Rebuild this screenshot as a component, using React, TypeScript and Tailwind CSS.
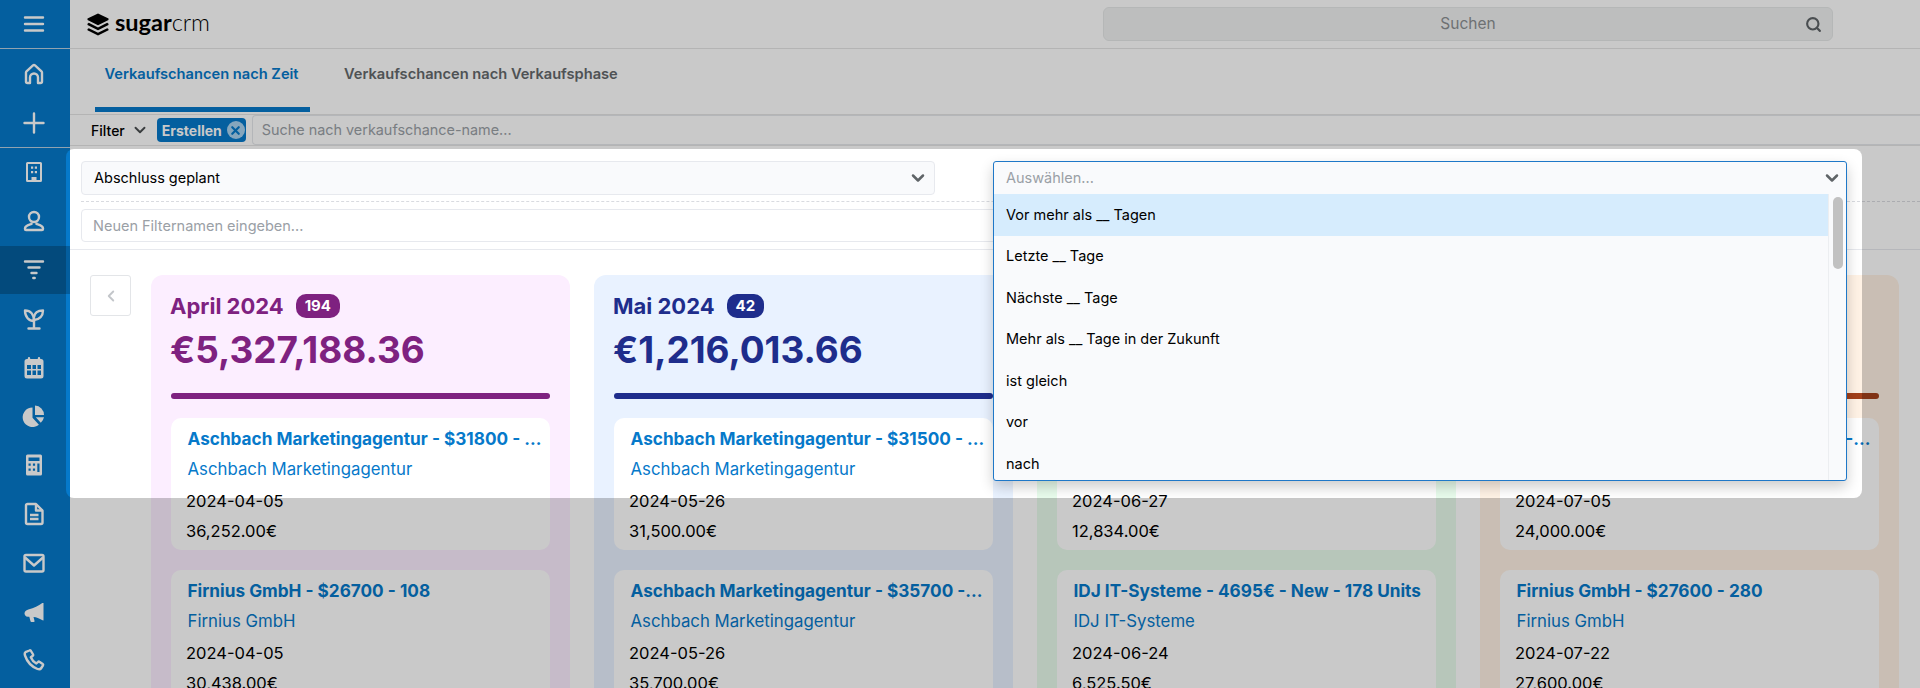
import { ChevronDown, ChevronLeft, Search, X } from "lucide-react";

const sb = "fill-none stroke-current stroke-[2.4]";

const Menu = () => (
  <svg viewBox="0 0 24 24" className={"h-6 w-6 " + sb} strokeLinecap="round">
    <path d="M3 5.500h18M3 12h18M3 18.500h18" />
  </svg>
);
const Home = () => (
  <svg viewBox="0 0 24 24" className={"h-6 w-6 " + sb} strokeLinejoin="round">
    <path d="M5.500 21A1.500 1.500 0 0 1 4 19.500v-9a1.500 1.500 0 0 1 .5-1.100l6.500-6a1.500 1.500 0 0 1 2 0l6.500 6a1.500 1.500 0 0 1 .5 1.100v9a1.500 1.500 0 0 1-1.500 1.500H16v-5.500a4 4 0 0 0-8 0V21z" />
  </svg>
);
const Plus = () => (
  <svg viewBox="0 0 24 24" className={"h-6 w-6 " + sb} strokeLinecap="round">
    <path d="M12 2.500v19M2.500 12h19" />
  </svg>
);
const Building = () => (
  <svg viewBox="0 0 24 24" className="h-6 w-6 fill-current">
    <path fillRule="evenodd" d="M5.500 2h13A1.500 1.500 0 0 1 20 3.500v17a1.500 1.500 0 0 1-1.500 1.500h-13A1.500 1.500 0 0 1 4 20.500v-17A1.500 1.500 0 0 1 5.500 2zM6 4v16h3.500v-3h5v3H18V4zm3 2.500h2.200v2.200H9zm3.800 0H15v2.200h-2.200zM9 11h2.200v2.200H9zm3.800 0H15v2.200h-2.200z" />
  </svg>
);
const User = () => (
  <svg viewBox="0 0 24 24" className={"h-6 w-6 " + sb} strokeLinejoin="round">
    <circle cx="12" cy="8" r="5" />
    <path d="M9.500 13.500v1.500c-2 .8-6.500 1.500-6.500 4.500v.5a1 1 0 0 0 1 1h16a1 1 0 0 0 1-1v-.5c0-3-4.500-3.700-6.500-4.500v-1.500" />
  </svg>
);
const Funnel = () => (
  <svg viewBox="0 0 24 24" className={"h-6 w-6 " + sb} strokeLinecap="round">
    <path d="M3 3.500h18M6.500 9.500h11M9.500 15h5M11.300 20h1.400" />
  </svg>
);
const Sprout = () => (
  <svg viewBox="0 0 24 24" className={"h-6 w-6 " + sb} strokeLinecap="round" strokeLinejoin="round">
    <path d="M12 21v-7M6.500 21.500h11" />
    <path d="M12 14C7 14 3 10 3 3.500c5.500 0 9 4 9 10.500z" />
    <path d="M12 10c.5-3.500 3.500-6.500 9-6.500 0 5.500-3.500 9-9 9.500" />
  </svg>
);
const Calendar = () => (
  <svg viewBox="0 0 24 24" className="h-6 w-6 fill-current">
    <path fillRule="evenodd" d="M7 1a1.200 1.200 0 0 1 1.200 1.200V3h7.600v-.8a1.200 1.200 0 0 1 2.400 0V3H19a2.500 2.500 0 0 1 2.500 2.500V20a2.500 2.500 0 0 1-2.500 2.500H5A2.500 2.500 0 0 1 2.500 20V5.500A2.500 2.500 0 0 1 5 3h.8v-.8A1.200 1.200 0 0 1 7 1zM5 9v4h4V9zm5.500 0v4h3.500V9zM15.500 9v4H19V9zM5 14.500V19h4v-4.500zm5.500 0V19h3.500v-4.500zm5 0V19H19v-4.500z" />
  </svg>
);
const Pie = () => (
  <svg viewBox="0 0 24 24" className="h-6 w-6 fill-current">
    <path d="M10.500 3.500v10.300l6.400 6.900A9.800 9.800 0 1 1 10.500 3.500z" />
    <path d="M13 1.500a9.500 9.500 0 0 1 9 9.500h-9z" />
    <path d="M13.800 13.300H22a9.800 9.800 0 0 1-3.200 5.400z" />
  </svg>
);
const Calc = () => (
  <svg viewBox="0 0 24 24" className="h-6 w-6 fill-current">
    <path fillRule="evenodd" d="M5.500 1.500h13A1.500 1.500 0 0 1 20 3v18a1.500 1.500 0 0 1-1.500 1.500h-13A1.500 1.500 0 0 1 4 21V3a1.500 1.500 0 0 1 1.500-1.500zM6.500 4.500v3.500h11V4.500zm0 6v2.200h2.200v-2.200zm4.400 0v2.200h2.200v-2.200zm4.400 0V19h2.200v-8.500zM6.500 15.500v2.200h2.200v-2.200zm4.400 0v2.200h2.200v-2.200z" />
  </svg>
);
const Doc = () => (
  <svg viewBox="0 0 24 24" className={"h-6 w-6 " + sb} strokeLinejoin="round">
    <path d="M4 3.500A1.500 1.500 0 0 1 5.500 2H14l6.500 6.500V20.500a1.500 1.500 0 0 1-1.500 1.500H5.500A1.500 1.500 0 0 1 4 20.500z" />
    <path d="M14 2v6.500h6.500M8 13h8.500M8 17h8.500" />
  </svg>
);
const Mail = () => (
  <svg viewBox="0 0 24 24" className={"h-6 w-6 " + sb} strokeLinejoin="round">
    <rect x="2.500" y="4" width="19" height="16.500" rx="1.500" />
    <path d="M3 6.500l9 8 9-8" />
  </svg>
);
const Megaphone = () => (
  <svg viewBox="0 0 24 24" className="h-6 w-6 fill-current">
    <path d="M21.500 3v17.500l-1-.2c-3.500-2-6-3-9-3.300l1 3.700a1 1 0 0 1-1 1.300H9.500a1 1 0 0 1-1-.8L7.300 16.800H6a3.500 3.500 0 0 1-3.200-4.900c.5-1 2-2 3.500-2.400 6-1.300 10-3.600 14-6.500z" />
  </svg>
);
const Phone = () => (
  <svg viewBox="0 0 24 24" className={"h-6 w-6 " + sb} strokeLinejoin="round">
    <path d="M7.500 2.500L4 3.800C2.800 4.500 2.500 6 3 7.500 5 13.500 9.500 18.500 15.500 21c1.500.6 3 .3 3.800-1l1.700-2.700a1 1 0 0 0-.3-1.300l-3.300-2.300a1 1 0 0 0-1.300.1l-1.800 1.700c-2.500-1.300-4.300-3.500-5.500-6.300l2-1.500a1 1 0 0 0 .3-1.200L9 3a1 1 0 0 0-1.500-.5z" />
  </svg>
);

const Logo = () => (
  <svg viewBox="0 0 24 24" className="h-[23px] w-[24px]" preserveAspectRatio="none">
    <path d="M12 .5l10.500 5.300v1.400L12 12.700 1.500 7.200V5.800z" fill="#000" />
    <path d="M2.800 10.300L12 15l9.200-4.700 1.300.9v1.300L12 18 1.500 12.500v-1.300z" fill="#000" />
    <path d="M2.800 15.800L12 20.500l9.200-4.700 1.300.9V18L12 23.500 1.500 18v-1.300z" fill="#000" />
  </svg>
);

const upper = [Home, Plus];
const lower = [Building, User, Funnel, Sprout, Calendar, Pie, Calc, Doc, Mail, Megaphone, Phone];

function Sidebar() {
  return (
    <aside className="w-[70px] shrink-0 bg-[#0679ca] text-white">
      <div className="flex h-[49px] items-center justify-center border-b border-[#e5e5e5]/80 pr-[2px]">
        <Menu />
      </div>
      <div className="flex h-[99px] flex-col border-b border-[#e5e5e5]/80">
        {upper.map((Icon, i) => (
          <div key={i} className="flex h-[49px] items-center justify-center pr-[2px]">
            <Icon />
          </div>
        ))}
      </div>
      {lower.map((Icon, i) => (
        <div
          key={i}
          className={"flex h-[48.8px] items-center justify-center pr-[2px] " + (Icon === Funnel ? "bg-[#045e9e]" : "")}
        >
          <Icon />
        </div>
      ))}
    </aside>
  );
}

type Card = { title: string; account: string; date: string; amount: string };
type Col = {
  month: string;
  count?: string;
  total?: string;
  bg: string;
  color: string;
  bar: string;
  badge: string;
  cards: Card[];
};

const columns: Col[] = [
  {
    month: "April 2024",
    count: "194",
    total: "€5,327,188.36",
    bg: "bg-[#fceeff]",
    color: "text-[#7e2180]",
    bar: "bg-[#7e2180]",
    badge: "bg-[#7e2180]",
    cards: [
      { title: "Aschbach Marketingagentur - $31800 - 101 Units", account: "Aschbach Marketingagentur", date: "2024-04-05", amount: "36,252.00€" },
      { title: "Firnius GmbH - $26700 - 108", account: "Firnius GmbH", date: "2024-04-05", amount: "30,438.00€" },
    ],
  },
  {
    month: "Mai 2024",
    count: "42",
    total: "€1,216,013.66",
    bg: "bg-[#e9f2ff]",
    color: "text-[#1e2d8c]",
    bar: "bg-[#1e2d8c]",
    badge: "bg-[#1e2d8c]",
    cards: [
      { title: "Aschbach Marketingagentur - $31500 - 101 Units", account: "Aschbach Marketingagentur", date: "2024-05-26", amount: "31,500.00€" },
      { title: "Aschbach Marketingagentur - $35700 - 101 Units", account: "Aschbach Marketingagentur", date: "2024-05-26", amount: "35,700.00€" },
    ],
  },
  {
    month: "Juni 2024",
    bg: "bg-[#e8fcec]",
    color: "text-[#166534]",
    bar: "bg-[#166534]",
    badge: "bg-[#166534]",
    cards: [
      { title: "IDJ IT-Systeme", account: "IDJ IT-Systeme", date: "2024-06-27", amount: "12,834.00€" },
      { title: "IDJ IT-Systeme - 4695€ - New - 178 Units", account: "IDJ IT-Systeme", date: "2024-06-24", amount: "6,525.50€" },
    ],
  },
  {
    month: "Juli 2024",
    bg: "bg-[#fff2e5]",
    color: "text-[#a3401a]",
    bar: "bg-[#a3401a]",
    badge: "bg-[#a3401a]",
    cards: [
      { title: "Aschbach Marketingagentur - $24000 - 101 Units", account: "Aschbach Marketingagentur", date: "2024-07-05", amount: "24,000.00€" },
      { title: "Firnius GmbH - $27600 - 280", account: "Firnius GmbH", date: "2024-07-22", amount: "27,600.00€" },
    ],
  },
];

function OppCard({ card }: { card: Card }) {
  return (
    <div className="h-[132px] rounded-[10px] bg-white pl-[15px] pr-[7px] pt-[9px] text-[16.500px] leading-6">
      <div className="truncate pl-[1.500px] text-[17.200px] font-bold text-[#0679ca]">{card.title}</div>
      <div className="mt-[6px] pl-[1.500px] text-[16.800px] text-[#0679ca]">{card.account}</div>
      <div className="mt-2 text-black">{card.date}</div>
      <div className="mt-[6px] text-black">{card.amount}</div>
    </div>
  );
}

function Column({ col }: { col: Col }) {
  return (
    <div className={"h-[500px] w-[419px] shrink-0 rounded-t-[12px] px-5 pt-[19px] " + col.bg}>
      <div className="h-[99px]">
        <div className={"-ml-[1px] flex h-[24px] items-center gap-[12px] text-[22px] font-bold " + col.color}>
          {col.month}
          {col.count && (
            <span className={"flex h-[24px] items-center rounded-[10px] px-[9px] text-[15px] font-bold text-white " + col.badge}>
              {col.count}
            </span>
          )}
        </div>
        <div className={"-ml-[1px] mt-[10px] text-[36.900px] font-bold leading-[44px] " + col.color}>{col.total}</div>
      </div>
      <div className={"h-[6px] rounded-full " + col.bar} />
      <div className="mt-[19px] flex flex-col gap-5">
        {col.cards.map((c) => (
          <OppCard key={c.title + c.date} card={c} />
        ))}
      </div>
    </div>
  );
}

const options = [
  "Vor mehr als __ Tagen",
  "Letzte __ Tage",
  "Nächste __ Tage",
  "Mehr als __ Tage in der Zukunft",
  "ist gleich",
  "vor",
  "nach",
];

export default function App() {
  return (
    <div className="relative flex h-[688px] w-[1920px] overflow-hidden bg-white font-[Inter,sans-serif] text-black">
      <Sidebar />
      <main className="min-w-0 flex-1">
        <header className="flex h-[49px] items-center border-b border-[#e5e5e5] pl-[16px]">
          <Logo />
          <span className="ml-[5px] pb-[2px] font-[Lato,sans-serif] text-[23.500px] font-bold leading-none">
            sugar<span className="font-light">crm</span>
          </span>
          <div className="relative ml-[893px] flex h-[34px] w-[730px] items-center justify-center rounded-[6px] border border-[#e6e8e8] bg-[#f0f2f2] text-[15.500px] text-[#8c9092]">
            Suchen
            <Search className="absolute right-[10px] h-[17px] w-[17px] text-[#5f6467]" strokeWidth={3} />
          </div>
        </header>
        <div className="flex h-[66px] border-b border-[#e5e5e5] pl-[25px] text-[14.650px] font-semibold">
          <div className="relative flex h-[63px] w-[215px] justify-center pr-[2px] pt-[15px] text-[#0679ca]">
            Verkaufschancen nach Zeit
            <div className="absolute bottom-0 left-0 right-0 h-[5px] bg-[#0679ca]" />
          </div>
          <div className="ml-[34px] pt-[15px] text-[#65696c]">Verkaufschancen nach Verkaufsphase</div>
        </div>
        <div className="flex h-[31px] items-center border-b border-[#e5e5e5] pl-[21px]">
          <span className="text-[14px] font-medium">Filter</span>
          <ChevronDown className="ml-[6px] h-[18px] w-[18px] text-[#4a4e50]" strokeWidth={2.500} />
          <div className="ml-[8px] flex h-[24px] w-[89px] shrink-0 items-center rounded-[4px] bg-[#0679ca] pl-[5px] text-[14px] font-bold text-white">
            Erstellen
            <span className="ml-[5px] flex h-[18px] w-[18px] items-center justify-center rounded-full bg-[#a9d3f0]">
              <X className="h-[13px] w-[13px] text-[#0679ca]" strokeWidth={4} />
            </span>
          </div>
          <div className="ml-[6px] flex h-full flex-1 items-center rounded-l-[4px] border border-r-0 border-[#e5e7eb] pl-[9px] text-[14.400px] text-[#9aa0a6]">
            Suche nach verkaufschance-name...
          </div>
        </div>
        <div className="pl-[11px] pt-[15px]">
          <div className="flex h-[34px] w-[854px] items-center justify-between rounded-[4px] border border-[#e7e9ee] bg-[#f9fafc] pl-[12px] pr-[6px] text-[14.500px]">
            Abschluss geplant
            <ChevronDown className="h-[20px] w-[20px] text-[#5f6467]" strokeWidth={3} />
          </div>
          <div className="mt-[6px] border-t border-dashed border-[#d9dbe0]" />
          <div className="mt-[7px] flex h-[33px] w-[1000px] items-center rounded-[4px] border border-[#e7e9ee] pl-[11px] text-[14.500px] text-[#9aa0a6]">
            Neuen Filternamen eingeben...
          </div>
        </div>
        <div className="mt-[7px] flex gap-5 border-t border-[#e7e9ee] pl-5 pt-[25px]">
          <button className="flex h-[41px] w-[41px] shrink-0 items-center justify-center rounded-[3px] border border-[#e3e5e8] bg-white">
            <ChevronLeft className="h-[18px] w-[18px] text-[#c3c6ca]" strokeWidth={2.500} />
          </button>
          <div className="flex gap-[24px]">
            {columns.map((col) => (
              <Column key={col.month} col={col} />
            ))}
          </div>
        </div>
      </main>

      {/* tour spotlight */}
      <div className="pointer-events-none absolute left-[66px] top-[149px] h-[349px] w-[1796px] rounded-[8px] shadow-[0_0_0_3000px_rgba(0,0,0,0.21)]" />

      {/* open dropdown */}
      <div className="absolute left-[993px] top-[161px] flex h-[320px] w-[854px] flex-col rounded-[3px] border border-[#1f78c8] bg-[#f9fafc] text-[14.500px] shadow-[0_6px_14px_rgba(0,0,0,0.2)]">
        <div className="flex h-[32px] shrink-0 items-center justify-between pl-[12px] pr-[4px] text-[#9aa0a6]">
          Auswählen...
          <ChevronDown className="h-[20px] w-[20px] text-[#5f6467]" strokeWidth={3} />
        </div>
        <div className="flex min-h-0 flex-1">
          <div className="flex-1">
            {options.map((o, i) => (
              <div
                key={o}
                className={"flex h-[41.500px] items-center pl-[12px] " + (i === 0 ? "bg-[#d6ecfd]" : "")}
              >
                {o}
              </div>
            ))}
          </div>
          <div className="w-[18px] shrink-0 border-l border-[#eceef1] pl-[4px] pt-[3px]">
            <div className="h-[72px] w-[10px] rounded-full bg-[#c1c1c1]" />
          </div>
        </div>
      </div>
    </div>
  );
}
